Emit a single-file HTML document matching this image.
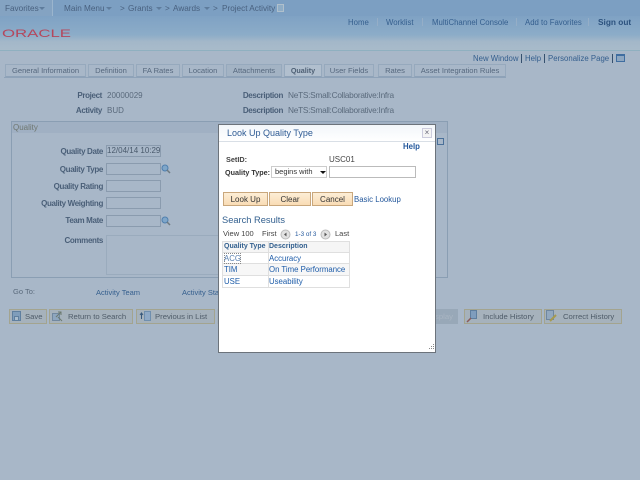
<!DOCTYPE html>
<html><head><meta charset="utf-8">
<style>
html,body{margin:0;padding:0;width:640px;height:480px;overflow:hidden;background:#a8b7c8}
body{position:relative;font-family:"Liberation Sans",sans-serif;font-size:8px}
.t{position:absolute;white-space:nowrap;line-height:11px}
.b{position:absolute;box-sizing:border-box}
.l{color:#4a5f78;font-weight:bold;font-size:8px;letter-spacing:-.35px}
.v{color:#5a6a7c;font-size:8.3px;letter-spacing:-.27px}
.a{color:#355f8e;font-size:7.8px}
.n{color:#49617f;font-size:8.2px}
.tab{position:absolute;top:64px;height:13px;box-sizing:border-box;border:1px solid #96a9bd;border-bottom-color:#8ea2b8;background:#a8b7c8;color:#56687e;text-align:center;line-height:12px;font-size:7.6px;white-space:nowrap}
.inp{position:absolute;left:106px;width:55px;height:12px;box-sizing:border-box;border:1px solid #8a9bae;background:#a8b7c8;color:#4a5a6c;font-size:8px;line-height:10px;white-space:nowrap;overflow:hidden}
.btn{position:absolute;top:309px;height:15px;box-sizing:border-box;border:1px solid #a3a48f;background:#a6b2bc;color:#4f5c69;line-height:13px;font-size:7.7px;white-space:nowrap}
.obtn{position:absolute;top:192px;height:14px;box-sizing:border-box;border:1px solid #c9a77c;background:linear-gradient(#fdeed6,#f9dcb5);color:#333;text-align:center;line-height:14px;font-size:8px}
.cell{position:absolute;white-space:nowrap;font-size:7.8px;line-height:11px;color:#1c5ba8}
svg{position:absolute}
</style></head><body>
<div class="b" style="left:0;top:0;width:640px;height:16px;background:#7c9fc2"></div>
<div class="b" style="left:0;top:16px;width:640px;height:34px;background:linear-gradient(#7fa2c4,#8cacc8 55%,#a3b7c9 75%,#a8bbca)"></div>
<div class="b" style="left:0;top:50px;width:640px;height:1px;background:#8fb0c0"></div>
<div class="b" style="left:0;top:0;width:53px;height:16px;background:#84a3c2;border-right:1px solid #9bb5cd"></div>
<div class="t n" style="left:5px;top:3px">Favorites</div>
<div class="b" style="left:39px;top:7px;border:3px solid transparent;border-top:3px solid #5e7c9c"></div>
<div class="t n" style="left:64px;top:3px">Main Menu</div>
<div class="b" style="left:106px;top:7px;border:3px solid transparent;border-top:3px solid #5e7c9c"></div>
<div class="t n" style="left:120px;top:3px">&gt;</div>
<div class="t n" style="left:128px;top:3px">Grants</div>
<div class="b" style="left:156px;top:7px;border:3px solid transparent;border-top:3px solid #5e7c9c"></div>
<div class="t n" style="left:165px;top:3px">&gt;</div>
<div class="t n" style="left:173px;top:3px">Awards</div>
<div class="b" style="left:204px;top:7px;border:3px solid transparent;border-top:3px solid #5e7c9c"></div>
<div class="t n" style="left:213px;top:3px">&gt;</div>
<div class="t n" style="left:222px;top:3px">Project Activity</div>
<div class="b" style="left:277px;top:4px;width:7px;height:8px;border:1px solid #b0c0cc;background:#8fadc6"></div>
<svg style="left:2px;top:28px" width="70" height="11"><text x="0" y="9" font-family="Liberation Sans" font-size="11" fill="#b5475c" textLength="69" lengthAdjust="spacingAndGlyphs">ORACLE</text></svg>
<div class="t a" style="left:348px;top:17px">Home</div>
<div class="b" style="left:377px;top:18px;width:1px;height:8px;background:#95aec7"></div>
<div class="t a" style="left:386px;top:17px">Worklist</div>
<div class="b" style="left:422px;top:18px;width:1px;height:8px;background:#95aec7"></div>
<div class="t a" style="left:432px;top:17px">MultiChannel Console</div>
<div class="b" style="left:516px;top:18px;width:1px;height:8px;background:#95aec7"></div>
<div class="t a" style="left:525px;top:17px">Add to Favorites</div>
<div class="b" style="left:588px;top:18px;width:1px;height:8px;background:#95aec7"></div>
<div class="t" style="left:598px;top:17px;color:#2c527e;font-weight:bold;font-size:8.3px">Sign out</div>
<div class="t a" style="left:473px;top:53px">New Window</div>
<div class="b" style="left:521px;top:54px;width:1px;height:9px;background:#35506e"></div>
<div class="t a" style="left:525px;top:53px">Help</div>
<div class="b" style="left:544px;top:54px;width:1px;height:9px;background:#35506e"></div>
<div class="t a" style="left:548px;top:53px">Personalize Page</div>
<div class="b" style="left:612px;top:54px;width:1px;height:9px;background:#35506e"></div>
<div class="b" style="left:616px;top:54px;width:9px;height:8px;border:1px solid #3f6da0;background:#8da6c0;border-top-width:2px"></div>
<div class="b" style="left:4px;top:77px;width:222px;height:1px;background:#8ea2b8"></div>
<div class="b" style="left:186px;top:77px;width:320px;height:1px;background:#8ea2b8"></div>
<div class="tab" style="left:5px;width:81px">General Information</div>
<div class="tab" style="left:88px;width:46px">Definition</div>
<div class="tab" style="left:136px;width:44px">FA Rates</div>
<div class="tab" style="left:182px;width:42px">Location</div>
<div class="tab" style="left:226px;width:56px;background:#a3b3c4">Attachments</div>
<div class="tab" style="left:284px;width:38px;background:#b1bfce;font-weight:bold;font-size:7.2px;color:#4d5f74">Quality</div>
<div class="tab" style="left:324px;width:50px">User Fields</div>
<div class="tab" style="left:378px;width:34px">Rates</div>
<div class="tab" style="left:414px;width:92px">Asset Integration Rules</div>
<div class="t l" style="right:538px;top:90px">Project</div>
<div class="t v" style="left:107px;top:90px;font-size:8px;letter-spacing:0">20000029</div>
<div class="t l" style="right:357px;top:90px">Description</div>
<div class="t v" style="left:288px;top:90px">NeTS:Small:Collaborative:Infra</div>
<div class="t l" style="right:538px;top:105px">Activity</div>
<div class="t v" style="left:107px;top:105px;font-size:8px;letter-spacing:0">BUD</div>
<div class="t l" style="right:357px;top:105px">Description</div>
<div class="t v" style="left:288px;top:105px">NeTS:Small:Collaborative:Infra</div>
<div class="b" style="left:11px;top:121px;width:437px;height:157px;border:1px solid #8a9eb3"></div>
<div class="b" style="left:12px;top:122px;width:435px;height:11px;background:#a0b0c3"></div>
<div class="t" style="left:13px;top:122px;color:#6f7770;font-size:8px">Quality</div>
<div class="t l" style="right:537px;top:146px">Quality Date</div>
<div class="inp" style="top:145px">12/04/14 10:29:</div>
<div class="t l" style="right:537px;top:164px">Quality Type</div>
<div class="inp" style="top:163px"></div>
<svg style="left:161px;top:164px" width="10" height="10"><circle cx="4" cy="4" r="3" fill="#7fa6c9" stroke="#4f7fae"/><path d="M6 6l3 3" stroke="#6f7a80" stroke-width="1.5"/></svg>
<div class="t l" style="right:537px;top:181px">Quality Rating</div>
<div class="inp" style="top:180px"></div>
<div class="t l" style="right:537px;top:198px">Quality Weighting</div>
<div class="inp" style="top:197px"></div>
<div class="t l" style="right:537px;top:215px">Team Mate</div>
<div class="inp" style="top:215px"></div>
<svg style="left:161px;top:216px" width="10" height="10"><circle cx="4" cy="4" r="3" fill="#7fa6c9" stroke="#4f7fae"/><path d="M6 6l3 3" stroke="#6f7a80" stroke-width="1.5"/></svg>
<div class="t l" style="right:537px;top:235px">Comments</div>
<div class="b" style="left:106px;top:235px;width:120px;height:40px;border:1px solid #9aabbd"></div>
<div class="b" style="left:437px;top:138px;width:7px;height:7px;border:1px solid #4a7099"></div>
<div class="t v" style="left:13px;top:286px;font-size:7.5px;letter-spacing:0">Go To:</div>
<div class="t a" style="left:96px;top:287px;font-size:7.5px">Activity Team</div>
<div class="t a" style="left:182px;top:287px;font-size:7.5px">Activity Status</div>
<div class="btn" style="left:9px;width:38px;padding-left:15px">Save</div>
<svg style="left:12px;top:311px" width="10" height="11"><rect x=".5" y=".5" width="8" height="9" fill="#7f9dbb" stroke="#5f7f9f"/><rect x="2.5" y="5.5" width="4" height="4" fill="#a9bccd" stroke="#5f7f9f"/></svg>
<div class="btn" style="left:49px;width:84px;padding-left:18px">Return to Search</div>
<svg style="left:52px;top:311px" width="12" height="11"><rect x=".5" y="2.5" width="7" height="7" fill="#8ea6bf" stroke="#71889f"/><path d="M4 6l5-5M6 1h3v3M6 6l4 4" stroke="#6c7a70" fill="none"/></svg>
<div class="btn" style="left:136px;width:79px;padding-left:18px">Previous in List</div>
<svg style="left:139px;top:311px" width="12" height="11"><rect x="5.5" y=".5" width="6" height="9" fill="#8ea9c6" stroke="#6f8fae"/><path d="M2.5 8V2M1 4l1.5-2L4 4" stroke="#37597c" fill="none"/></svg>
<div class="b" style="left:217px;top:309px;width:3px;height:15px;background:#a6b2bc"></div>
<div class="b" style="left:436px;top:309px;width:22px;height:15px;background:#98a8b8"></div>
<div class="t" style="left:435px;top:311px;color:#a9b5c2;font-size:7.7px">splay</div>
<div class="btn" style="left:464px;width:78px;padding-left:18px">Include History</div>
<svg style="left:466px;top:310px" width="12" height="13"><rect x="4.5" y=".5" width="6" height="8" fill="#7f9dbd" stroke="#5f7f9f"/><path d="M1 12l4-4" stroke="#8a5a5a" stroke-width="1.5"/></svg>
<div class="btn" style="left:544px;width:78px;padding-left:18px">Correct History</div>
<svg style="left:546px;top:310px" width="12" height="13"><rect x=".5" y=".5" width="7" height="9" fill="#92a8bf" stroke="#6f87a0"/><path d="M4 11l6-6" stroke="#a69a50" stroke-width="2"/></svg>

<div class="b" style="left:218px;top:124px;width:218px;height:229px;background:#fff;border:1px solid #6c737b"></div>
<div class="b" style="left:219px;top:125px;width:216px;height:17px;background:linear-gradient(#f2f6fa,#fff);border-bottom:1px solid #d9dfe6"></div>
<div class="t" style="left:227px;top:128px;color:#2f5b94;font-size:9px">Look Up Quality Type</div>
<div class="b" style="left:422px;top:128px;width:10px;height:10px;border:1px solid #ccd;background:#f4f4f4;color:#667;font-size:8px;line-height:8px;text-align:center">×</div>
<div class="t" style="left:403px;top:141px;color:#24589c;font-weight:bold;font-size:7.8px">Help</div>
<div class="t" style="left:226px;top:154px;color:#444;font-weight:bold;font-size:7.3px">SetID:</div>
<div class="t" style="left:329px;top:154px;color:#444;font-size:8px">USC01</div>
<div class="t" style="left:225px;top:167px;color:#333;font-weight:bold;font-size:7.2px">Quality Type:</div>
<div class="b" style="left:271px;top:166px;width:56px;height:12px;border:1px solid #ccc;background:#fff;color:#333;line-height:10px;padding-left:3px;font-size:7.5px">begins with</div>
<div class="b" style="left:320px;top:171px;border:3px solid transparent;border-top:3px solid #111"></div>
<div class="b" style="left:329px;top:166px;width:87px;height:12px;border:1px solid #bbb;background:#fff"></div>
<div class="obtn" style="left:223px;width:45px">Look Up</div>
<div class="obtn" style="left:269px;width:42px">Clear</div>
<div class="obtn" style="left:312px;width:41px">Cancel</div>
<div class="t" style="left:354px;top:194px;color:#24589c;font-size:7.8px">Basic Lookup</div>
<div class="t" style="left:222px;top:215px;color:#33608f;font-size:9.3px">Search Results</div>
<div class="t" style="left:223px;top:228px;color:#444;font-size:7.5px">View 100</div>
<div class="t" style="left:262px;top:228px;color:#444;font-size:7.5px">First</div>
<svg style="left:280px;top:229px" width="11" height="11"><circle cx="5.5" cy="5.5" r="4.5" fill="#e2e2e2" stroke="#bbb"/><path d="M6.5 3.5v4l-2.5-2z" fill="#555"/></svg>
<div class="t" style="left:295px;top:229px;color:#24589c;font-size:6.3px">1-3 of 3</div>
<svg style="left:320px;top:229px" width="11" height="11"><circle cx="5.5" cy="5.5" r="4.5" fill="#e2e2e2" stroke="#bbb"/><path d="M4.5 3.5v4l2.5-2z" fill="#555"/></svg>
<div class="t" style="left:335px;top:228px;color:#444;font-size:7.5px">Last</div>
<div class="b" style="left:222px;top:241px;width:128px;height:47px;background:#dfdfdf"></div>
<div class="b" style="left:223px;top:242px;width:45px;height:10px;background:#f5f5f5"></div>
<div class="b" style="left:269px;top:242px;width:80px;height:10px;background:#f5f5f5"></div>
<div class="b" style="left:223px;top:253px;width:45px;height:10px;background:#fff"></div>
<div class="b" style="left:269px;top:253px;width:80px;height:10px;background:#fff"></div>
<div class="b" style="left:223px;top:264px;width:45px;height:11px;background:#f7f7f7"></div>
<div class="b" style="left:269px;top:264px;width:80px;height:11px;background:#f7f7f7"></div>
<div class="b" style="left:223px;top:276px;width:45px;height:11px;background:#fff"></div>
<div class="b" style="left:269px;top:276px;width:80px;height:11px;background:#fff"></div>
<div class="cell" style="left:224px;top:241px;font-weight:bold;font-size:7px;color:#33608f">Quality Type</div>
<div class="cell" style="left:269px;top:241px;font-weight:bold;font-size:7px;color:#33608f">Description</div>
<div class="cell" style="left:224px;top:253px;outline:1px dotted #888;outline-offset:-1px;color:#5a80b0">ACG</div>
<div class="cell" style="left:269px;top:253px">Accuracy</div>
<div class="cell" style="left:224px;top:264px">TIM</div>
<div class="cell" style="left:269px;top:264px">On Time Performance</div>
<div class="cell" style="left:224px;top:276px">USE</div>
<div class="cell" style="left:269px;top:276px">Useability</div>
<svg style="left:428px;top:344px" width="7" height="7"><g fill="#888"><rect x="5" y="0" width="1" height="1"/><rect x="3" y="2" width="1" height="1"/><rect x="5" y="2" width="1" height="1"/><rect x="1" y="4" width="1" height="1"/><rect x="3" y="4" width="1" height="1"/><rect x="5" y="4" width="1" height="1"/></g></svg>
</body></html>
